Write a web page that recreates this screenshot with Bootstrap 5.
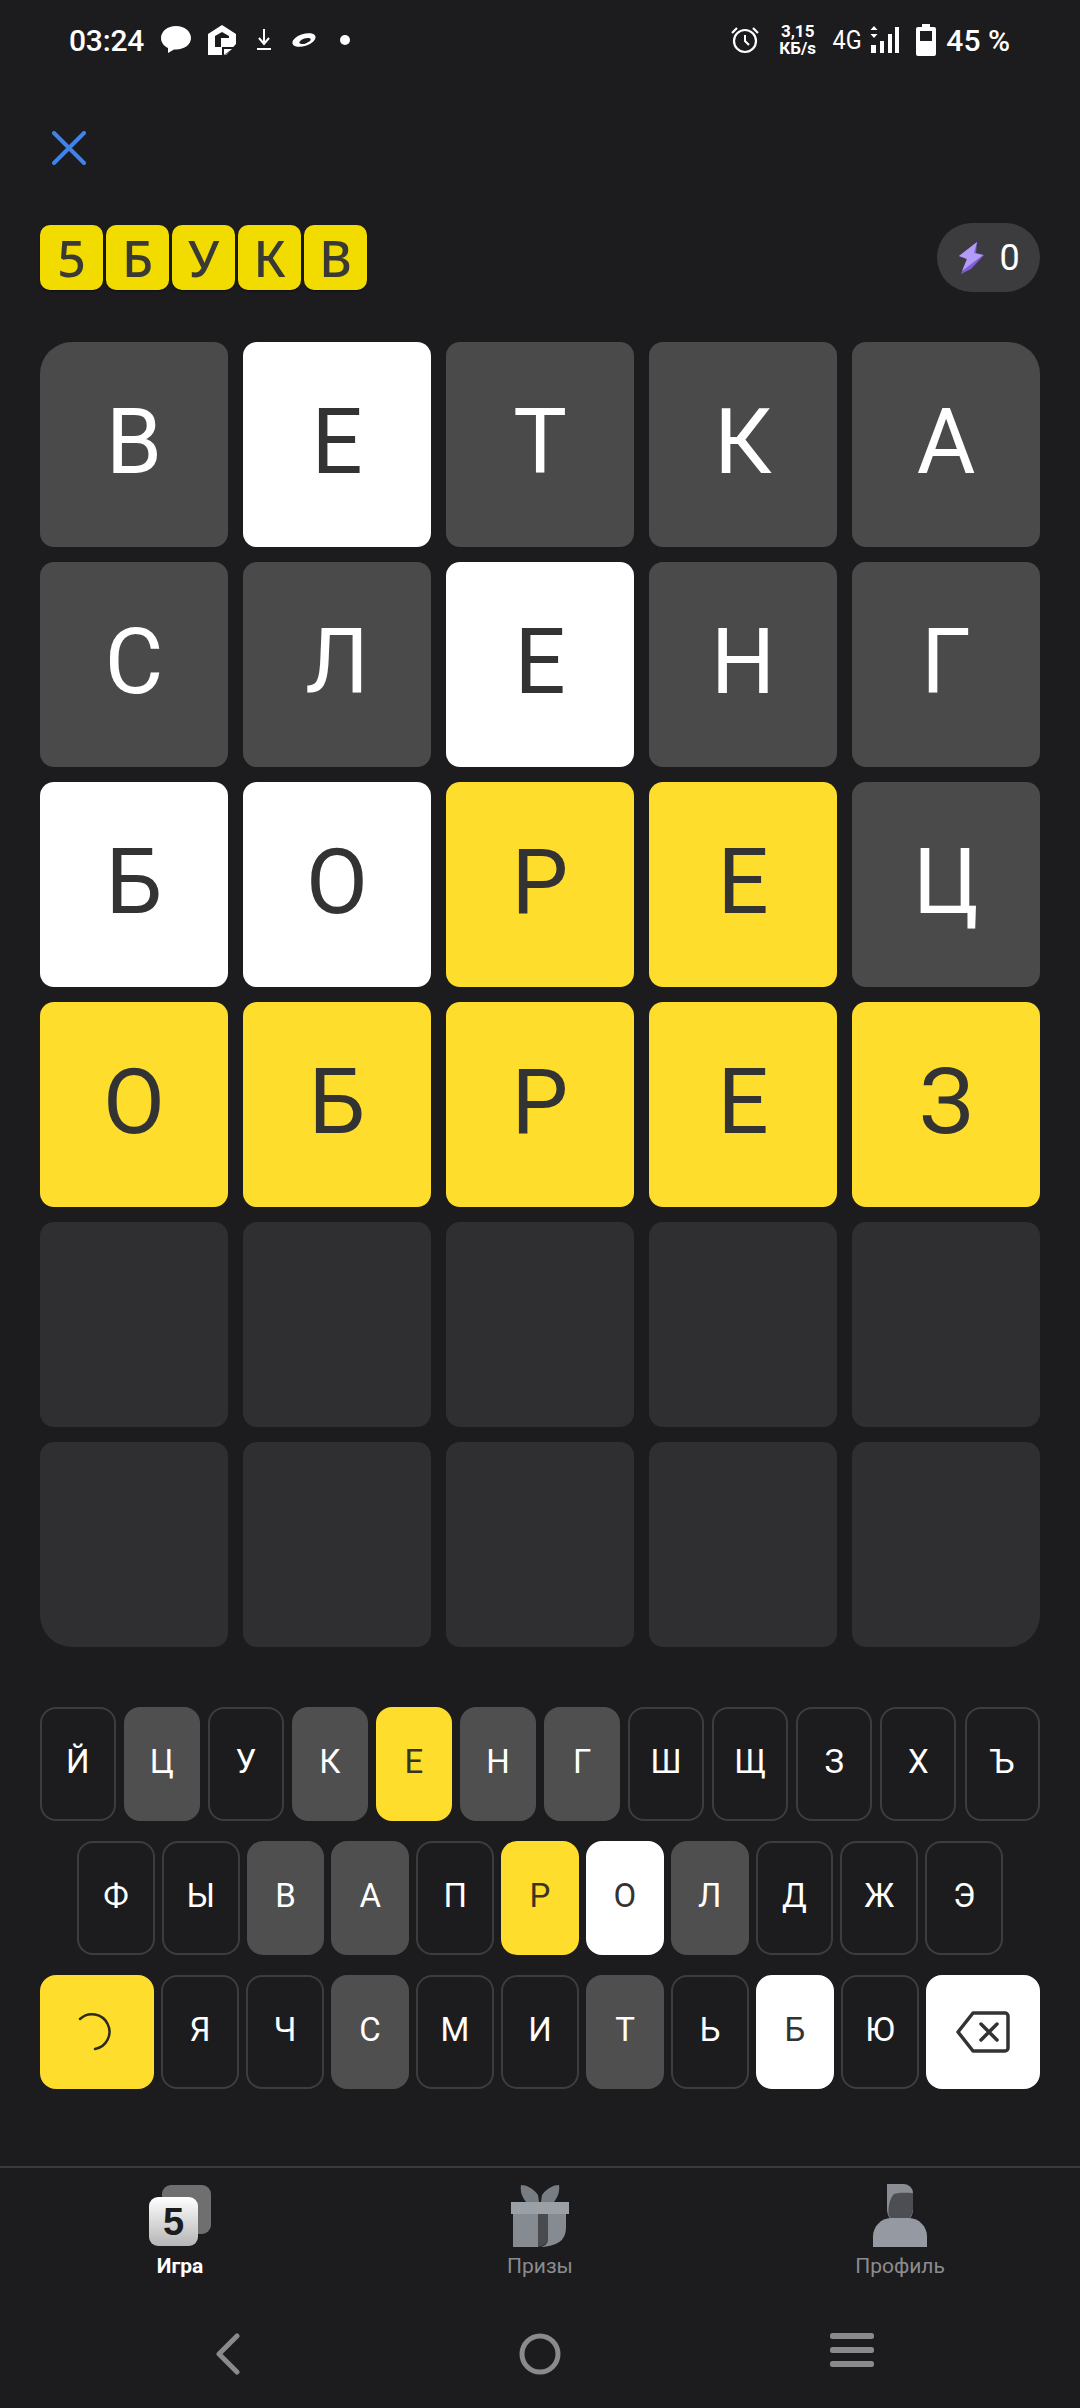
<!DOCTYPE html>
<html lang="ru">
<head>
  <meta charset="UTF-8" />
  <meta name="viewport" content="width=device-width, initial-scale=1" />
  <title>5 букв</title>
  <link href="https://cdn.jsdelivr.net/npm/bootstrap@5.3.0/dist/css/bootstrap.min.css" rel="stylesheet">
  <style>
    body {
      margin: 0;
      width: 1080px;
      height: 2408px;
      overflow: hidden;
      background: #1c1c1e;
      color: #fff;
      font-family: Roboto, "Noto Sans", sans-serif;
    }

    .status-bar { height: 80px; padding: 0 70px 0 69px; }
    .status-time { font-size: 30px; font-weight: 500; letter-spacing: -0.2px; margin-right: 16px; }
    .status-speed { font-size: 17px; font-weight: 700; line-height: 17px; text-align: center; margin-left: 20px; }
    .status-4g { font-size: 26px; margin-left: 15px; margin-right: 7px; display: inline-block; transform: scaleX(.9); }
    .status-pct { font-size: 30px; font-weight: 500; margin-left: 10px; }

    .close-row { height: 143px; padding: 51px 0 0 52px; }

    .head-row { height: 69px; padding: 0 40px; }
    .logo-tile {
      width: 63px;
      height: 65px;
      border-radius: 10px;
      background: #f2dc00;
      color: #3a3a34;
      box-shadow: 0 1px 2px rgba(0, 0, 0, .6);
      font-family: "Noto Sans", sans-serif;
      font-size: 50px;
      font-weight: 500;
      line-height: 1;
    }
    .bonus-pill { width: 103px; height: 69px; border-radius: 35px; background: #3c3c3e; font-size: 36px; gap: 14px; }

    .board {
      display: grid;
      grid-template-columns: repeat(5, 188px);
      grid-auto-rows: 205px;
      column-gap: 15px;
      row-gap: 15px;
      margin: 50px 40px 0;
    }
    .cell { border-radius: 14px; font-size: 90px; line-height: 1; padding-bottom: 4px; }
    .cell-gray { background: #4a4a4a; color: #fff; }
    .cell-white { background: #fff; color: #333; }
    .cell-yellow { background: #ffdd2d; color: #333; }
    .cell-empty { background: #2f2f31; }
    .corner-tl { border-top-left-radius: 32px; }
    .corner-tr { border-top-right-radius: 32px; }
    .corner-bl { border-bottom-left-radius: 32px; }
    .corner-br { border-bottom-right-radius: 32px; }

    .keyboard { margin-top: 60px; padding: 0 40px; }
    .key-row { height: 114px; gap: 7px; margin-bottom: 20px; }
    .key-row-top { gap: 8.5px; }
    .key-row-mid { padding: 0 37px; }
    .kb-key {
      flex: 1 1 0;
      border-radius: 16px;
      font-size: 33px;
      line-height: 1;
      border: 2px solid #3d3d3f;
      padding-bottom: 5px;
    }
    .kb-wide { flex: 0 0 114px; padding-bottom: 0; }
    .kb-gray { background: #4f4f4f; border-color: #4f4f4f; }
    .kb-white { background: #fff; border-color: #fff; color: #333; }
    .kb-yellow { background: #ffdd2d; border-color: #ffdd2d; color: #3a3520; }

    .tab-bar { margin-top: 77px; height: 133px; border-top: 2px solid #3a3a3c; padding-top: 15px; }
    .tab-item { color: #8b8c8f; font-size: 21px; line-height: 24px; padding: 0; }
    .tab-item svg { display: block; margin: 0 auto 7px; }
    .tab-active { color: #fff; font-weight: 700; }

    .sys-nav { padding: 34px 72px 0; }
    .sys-nav > div { flex: 1 1 0; }
  </style>
</head>
<body>

  <div class="status-bar d-flex align-items-center">
    <span class="status-time">03:24</span>
    <div class="d-flex align-items-center gap-3">
      <svg width="32" height="30" viewBox="0 0 32 30"><path d="M16 1C7.500 1 1 6.500 1 13c0 4.500 3 8 7 10l0 5 6-3.500h2C24.500 24.500 31 19.500 31 13S24.500 1 16 1z" fill="#fff"/></svg>
      <svg width="28" height="30" viewBox="0 0 28 30"><path fill-rule="evenodd" d="M14 0 28 9v10L18 30H0V9zM14 7 7 11v11h6V13h8v-2z" fill="#fff"/><path d="M14 30v-8l-7 0v-1" fill="none"/><path d="M14 22h12L17 30h-3z" fill="#1c1c1e"/><path d="M16 24h8l-8 6z" fill="#fff"/></svg>
      <svg width="16" height="24" viewBox="0 0 16 24" class="ms-1"><path d="M8 1v13M3 10l5 6 5-6" fill="none" stroke="#fff" stroke-width="2"/><path d="M1 21h14" stroke="#fff" stroke-width="2"/></svg>
      <svg width="24" height="18" viewBox="0 0 24 18" class="ms-1"><ellipse cx="12" cy="9" rx="12" ry="6" transform="rotate(-18 12 9)" fill="#fff"/><ellipse cx="13" cy="10" rx="6" ry="2.500" transform="rotate(-18 13 10)" fill="#1c1c1e"/></svg>
      <svg width="10" height="10" viewBox="0 0 10 10" class="ms-2"><circle cx="5" cy="5" r="5" fill="#fff"/></svg>
    </div>
    <div class="d-flex align-items-center ms-auto">
      <svg width="28" height="28" viewBox="0 0 28 28"><circle cx="14" cy="15" r="11" fill="none" stroke="#fff" stroke-width="2.200"/><path d="M14 9v6l4 4" fill="none" stroke="#fff" stroke-width="2"/><path d="M1 7 6 2M27 7l-5-5" stroke="#fff" stroke-width="2.200"/></svg>
      <div class="status-speed">3,15<br>КБ/s</div>
      <span class="status-4g">4G</span>
      <svg width="30" height="28" viewBox="0 0 30 28"><path d="M4 0 7.500 4h-7zM4 12 .5 8h7z" fill="#fff"/><rect x="1" y="19" width="5" height="8" fill="#fff"/><rect x="10" y="15" width="4" height="12" fill="#fff"/><rect x="18" y="8" width="4" height="19" fill="#fff"/><rect x="25" y="1" width="4" height="26" fill="#fff"/></svg>
      <svg width="20" height="32" viewBox="0 0 20 32" class="ms-3"><path d="M6 0h8v3h4a2 2 0 0 1 2 2v25a2 2 0 0 1-2 2H2a2 2 0 0 1-2-2V5a2 2 0 0 1 2-2h4z" fill="#fff"/><rect x="4" y="7" width="12" height="10" fill="#1c1c1e"/></svg>
      <span class="status-pct">45 %</span>
    </div>
  </div>

  <div class="close-row">
    <svg width="34" height="34" viewBox="0 0 34 34" class="d-block"><path d="M2 2 32 32M32 2 2 32" stroke="#3f82ea" stroke-width="4" stroke-linecap="round"/></svg>
  </div>

  <div class="head-row d-flex align-items-center justify-content-between">
    <div class="d-flex" style="gap:3px">
      <div class="logo-tile d-flex align-items-center justify-content-center">5</div>
      <div class="logo-tile d-flex align-items-center justify-content-center">Б</div>
      <div class="logo-tile d-flex align-items-center justify-content-center">У</div>
      <div class="logo-tile d-flex align-items-center justify-content-center">К</div>
      <div class="logo-tile d-flex align-items-center justify-content-center">В</div>
    </div>
    <div class="bonus-pill d-flex align-items-center justify-content-center">
      <svg width="28" height="34" viewBox="0 0 28 34"><path d="M20 1 2 15l8 3-6 15 10-5 13-14-8-2z" fill="#7d5fd6"/><path d="M20 1 2 15l8 3-5 12 21-16-9-2z" fill="#b39bf8"/></svg>
      <span>0</span>
    </div>
  </div>

  <div class="board">
    <div class="cell cell-gray corner-tl d-flex align-items-center justify-content-center">В</div>
    <div class="cell cell-white d-flex align-items-center justify-content-center">Е</div>
    <div class="cell cell-gray d-flex align-items-center justify-content-center">Т</div>
    <div class="cell cell-gray d-flex align-items-center justify-content-center">К</div>
    <div class="cell cell-gray corner-tr d-flex align-items-center justify-content-center">А</div>

    <div class="cell cell-gray d-flex align-items-center justify-content-center">С</div>
    <div class="cell cell-gray d-flex align-items-center justify-content-center">Л</div>
    <div class="cell cell-white d-flex align-items-center justify-content-center">Е</div>
    <div class="cell cell-gray d-flex align-items-center justify-content-center">Н</div>
    <div class="cell cell-gray d-flex align-items-center justify-content-center">Г</div>

    <div class="cell cell-white d-flex align-items-center justify-content-center">Б</div>
    <div class="cell cell-white d-flex align-items-center justify-content-center">О</div>
    <div class="cell cell-yellow d-flex align-items-center justify-content-center">Р</div>
    <div class="cell cell-yellow d-flex align-items-center justify-content-center">Е</div>
    <div class="cell cell-gray d-flex align-items-center justify-content-center">Ц</div>

    <div class="cell cell-yellow d-flex align-items-center justify-content-center">О</div>
    <div class="cell cell-yellow d-flex align-items-center justify-content-center">Б</div>
    <div class="cell cell-yellow d-flex align-items-center justify-content-center">Р</div>
    <div class="cell cell-yellow d-flex align-items-center justify-content-center">Е</div>
    <div class="cell cell-yellow d-flex align-items-center justify-content-center">З</div>

    <div class="cell cell-empty"></div>
    <div class="cell cell-empty"></div>
    <div class="cell cell-empty"></div>
    <div class="cell cell-empty"></div>
    <div class="cell cell-empty"></div>

    <div class="cell cell-empty corner-bl"></div>
    <div class="cell cell-empty"></div>
    <div class="cell cell-empty"></div>
    <div class="cell cell-empty"></div>
    <div class="cell cell-empty corner-br"></div>
  </div>

  <div class="keyboard">
    <div class="key-row key-row-top d-flex">
      <div class="kb-key d-flex align-items-center justify-content-center">Й</div>
      <div class="kb-key kb-gray d-flex align-items-center justify-content-center">Ц</div>
      <div class="kb-key d-flex align-items-center justify-content-center">У</div>
      <div class="kb-key kb-gray d-flex align-items-center justify-content-center">К</div>
      <div class="kb-key kb-yellow d-flex align-items-center justify-content-center">Е</div>
      <div class="kb-key kb-gray d-flex align-items-center justify-content-center">Н</div>
      <div class="kb-key kb-gray d-flex align-items-center justify-content-center">Г</div>
      <div class="kb-key d-flex align-items-center justify-content-center">Ш</div>
      <div class="kb-key d-flex align-items-center justify-content-center">Щ</div>
      <div class="kb-key d-flex align-items-center justify-content-center">З</div>
      <div class="kb-key d-flex align-items-center justify-content-center">Х</div>
      <div class="kb-key d-flex align-items-center justify-content-center">Ъ</div>
    </div>
    <div class="key-row key-row-mid d-flex">
      <div class="kb-key d-flex align-items-center justify-content-center">Ф</div>
      <div class="kb-key d-flex align-items-center justify-content-center">Ы</div>
      <div class="kb-key kb-gray d-flex align-items-center justify-content-center">В</div>
      <div class="kb-key kb-gray d-flex align-items-center justify-content-center">А</div>
      <div class="kb-key d-flex align-items-center justify-content-center">П</div>
      <div class="kb-key kb-yellow d-flex align-items-center justify-content-center">Р</div>
      <div class="kb-key kb-white d-flex align-items-center justify-content-center">О</div>
      <div class="kb-key kb-gray d-flex align-items-center justify-content-center">Л</div>
      <div class="kb-key d-flex align-items-center justify-content-center">Д</div>
      <div class="kb-key d-flex align-items-center justify-content-center">Ж</div>
      <div class="kb-key d-flex align-items-center justify-content-center">Э</div>
    </div>
    <div class="key-row d-flex mb-0">
      <div class="kb-key kb-wide kb-yellow d-flex align-items-center justify-content-center">
        <svg width="40" height="40" viewBox="0 0 40 40"><path d="M3 7A17.500 17.500 0 1 1 18 37" fill="none" stroke="#2b2b1e" stroke-width="2.500" stroke-linecap="round"/></svg>
      </div>
      <div class="kb-key d-flex align-items-center justify-content-center">Я</div>
      <div class="kb-key d-flex align-items-center justify-content-center">Ч</div>
      <div class="kb-key kb-gray d-flex align-items-center justify-content-center">С</div>
      <div class="kb-key d-flex align-items-center justify-content-center">М</div>
      <div class="kb-key d-flex align-items-center justify-content-center">И</div>
      <div class="kb-key kb-gray d-flex align-items-center justify-content-center">Т</div>
      <div class="kb-key d-flex align-items-center justify-content-center">Ь</div>
      <div class="kb-key kb-white d-flex align-items-center justify-content-center">Б</div>
      <div class="kb-key d-flex align-items-center justify-content-center">Ю</div>
      <div class="kb-key kb-wide kb-white d-flex align-items-center justify-content-center">
        <svg width="54" height="42" viewBox="0 0 54 42"><path d="M17 2h32a3 3 0 0 1 3 3v32a3 3 0 0 1-3 3H17L2 21z" fill="none" stroke="#333" stroke-width="3.500" stroke-linejoin="round"/><path d="M25 13l16 16M41 13 25 29" stroke="#333" stroke-width="3.500" stroke-linecap="round"/></svg>
      </div>
    </div>
  </div>

  <nav class="tab-bar nav nav-justified">
    <a class="tab-item tab-active nav-link" href="#">
      <svg width="64" height="64" viewBox="0 0 64 64">
        <rect x="14" y="2" width="49" height="49" rx="9" fill="#6f6f6f"/>
        <defs><linearGradient id="face" x1="0" y1="0" x2="0" y2="1"><stop offset="0" stop-color="#fff"/><stop offset="1" stop-color="#b5b5b5"/></linearGradient></defs>
        <rect x="1" y="14" width="49" height="49" rx="9" fill="url(#face)"/>
        <text x="25.500" y="52" text-anchor="middle" font-family="'Liberation Sans', sans-serif" font-size="38" font-weight="700" fill="#1c1c1e">5</text>
      </svg>
      Игра
    </a>
    <a class="tab-item nav-link" href="#">
      <svg width="64" height="64" viewBox="0 0 64 64">
        <path d="M13 2c5 0 12 3 17 10l1 7H18C14 14 12 8 13 2zM51 2c-5 0-12 3-17 10l-1 7h13c4-5 6-11 5-17z" fill="#787d83"/>
        <path d="M5 31h25v33H5z" fill="#868b92"/>
        <path d="M30 31h10v25q0 6-10 8z" fill="#4a4b4e"/>
        <path d="M40 31h18v14q0 19-28 19h3q7-2 7-8z" fill="#868b92"/>
        <rect x="3" y="19" width="58" height="12" fill="#9ba0a7"/>
      </svg>
      Призы
    </a>
    <a class="tab-item nav-link" href="#">
      <svg width="64" height="64" viewBox="0 0 64 64">
        <path d="M19 1h17a9 9 0 0 1 9 9v16a13 15 0 0 1-26 0z" fill="#8a8e94"/>
        <path d="M45 10v16a13 15 0 0 1-24 7c-1-3-1-14 4-21 3-3 14-2 20-2z" fill="#4c4e53"/>
        <path d="M5 64V53c0-9 8-18 18-18h18c10 0 18 9 18 18v11z" fill="#959aa2"/>
      </svg>
      Профиль
    </a>
  </nav>

  <div class="sys-nav d-flex text-center">
    <div>
      <svg width="30" height="42" viewBox="0 0 30 42"><path d="M24 3 6 21l18 18" fill="none" stroke="#8a8a8a" stroke-width="5" stroke-linecap="round" stroke-linejoin="round"/></svg>
    </div>
    <div>
      <svg width="42" height="42" viewBox="0 0 42 42"><circle cx="21" cy="21" r="18" fill="none" stroke="#8a8a8a" stroke-width="5"/></svg>
    </div>
    <div>
      <svg width="44" height="34" viewBox="0 0 44 34"><rect y="0" width="44" height="6" rx="2.500" fill="#8a8a8a"/><rect y="14" width="44" height="6" rx="2.500" fill="#8a8a8a"/><rect y="28" width="44" height="6" rx="2.500" fill="#8a8a8a"/></svg>
    </div>
  </div>

  <script src="https://cdn.jsdelivr.net/npm/bootstrap@5.3.0/dist/js/bootstrap.bundle.min.js"></script>
</body>
</html>
